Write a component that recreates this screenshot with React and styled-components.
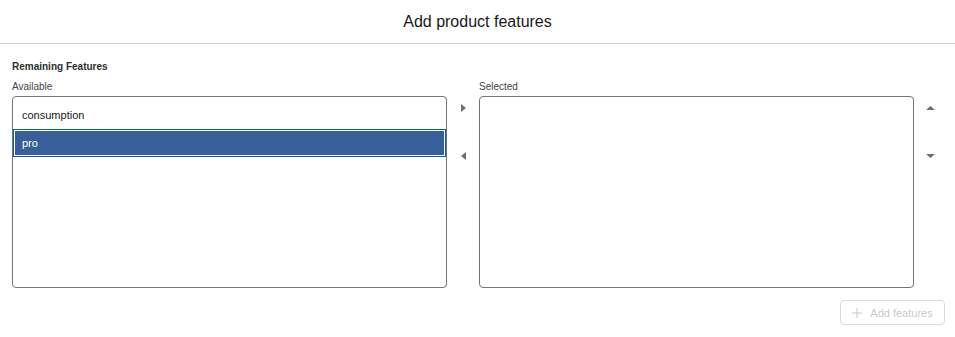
import React from 'react';
import styled, { createGlobalStyle } from 'styled-components';

const GlobalStyle = createGlobalStyle`
  body {
    margin: 0;
    background: #fff;
    font-family: 'Liberation Sans', Arial, sans-serif;
    color: #181818;
  }
`;

const Header = styled.div`
  height: 43px;
  border-bottom: 1px solid #c9c9c9;
  display: flex;
  align-items: center;
  justify-content: center;
  font-size: 16px;
  color: #181818;
`;

const Body = styled.div`
  padding: 16px 0 0 12px;
`;

const SectionTitle = styled.div`
  font-size: 10px;
  font-weight: bold;
  line-height: 14px;
  color: #2e2e2e;
  margin-bottom: 6px;
`;

const DualList = styled.div`
  display: grid;
  grid-template-columns: 435px 32px 435px 32px;
`;

const Column = styled.div`
  display: flex;
  flex-direction: column;
`;

const Label = styled.div`
  font-size: 10px;
  line-height: 14px;
  color: #444;
  margin-bottom: 2px;
`;

const ListBox = styled.ul`
  list-style: none;
  margin: 0;
  padding: 4px 0 0;
  height: 192px;
  box-sizing: border-box;
  border: 1px solid #747474;
  border-radius: 4px;
`;

const Option = styled.li`
  height: 28px;
  box-sizing: border-box;
  display: flex;
  align-items: center;
  padding: 0 0 1px 8px;
  font-size: 11px;
  color: ${({ selected }) => (selected ? '#fff' : '#181818')};
  background: ${({ selected }) => (selected ? '#385f97' : 'transparent')};
  border: 1px solid ${({ selected }) => (selected ? '#0b5cab' : 'transparent')};
  box-shadow: ${({ selected }) => (selected ? 'inset 0 0 0 1px #fff' : 'none')};
`;

const ArrowStack = styled.div`
  display: flex;
  flex-direction: column;
  align-items: center;
  gap: 24px;
  padding-top: 16px;
`;

const ArrowButton = styled.button`
  width: 24px;
  height: 24px;
  padding: 0;
  border: none;
  background: none;
  display: flex;
  align-items: center;
  justify-content: center;
`;

const Footer = styled.div`
  display: flex;
  justify-content: flex-end;
  padding: 12px 10px 0 0;
`;

const AddButton = styled.button`
  width: 105px;
  height: 25px;
  box-sizing: border-box;
  border: 1px solid #dddbda;
  border-radius: 4px;
  background: #fff;
  display: flex;
  align-items: center;
  justify-content: center;
  gap: 8px;
  font-family: 'Liberation Sans', Arial, sans-serif;
  font-size: 11px;
  color: #c9c9c9;
  padding: 0;
`;

const Triangle = ({ dir }) => {
  const paths = {
    right: 'M0 0 L5 4 L0 8 Z',
    left: 'M5 0 L0 4 L5 8 Z',
    up: 'M0 4 L4.5 0 L9 4 Z',
    down: 'M0 0 L4.5 4 L9 0 Z',
  };
  const vertical = dir === 'up' || dir === 'down';
  return (
    <svg width={vertical ? 9 : 5} height={vertical ? 4 : 8} viewBox={vertical ? '0 0 9 4' : '0 0 5 8'}>
      <path d={paths[dir]} fill="#706e6b" />
    </svg>
  );
};

const PlusIcon = () => (
  <svg width="10" height="10" viewBox="0 0 10 10">
    <path d="M5 0 V10 M0 5 H10" stroke="#c9c9c9" strokeWidth="1" />
  </svg>
);

const available = ['consumption', 'pro'];

const App = () => (
  <>
    <GlobalStyle />
    <Header>Add product features</Header>
    <Body>
      <SectionTitle>Remaining Features</SectionTitle>
      <DualList>
        <Column>
          <Label>Available</Label>
          <ListBox>
            {available.map((name) => (
              <Option key={name} selected={name === 'pro'}>{name}</Option>
            ))}
          </ListBox>
        </Column>
        <ArrowStack>
          <ArrowButton><Triangle dir="right" /></ArrowButton>
          <ArrowButton><Triangle dir="left" /></ArrowButton>
        </ArrowStack>
        <Column>
          <Label>Selected</Label>
          <ListBox />
        </Column>
        <ArrowStack>
          <ArrowButton><Triangle dir="up" /></ArrowButton>
          <ArrowButton><Triangle dir="down" /></ArrowButton>
        </ArrowStack>
      </DualList>
      <Footer>
        <AddButton><PlusIcon />Add features</AddButton>
      </Footer>
    </Body>
  </>
);

export default App;
